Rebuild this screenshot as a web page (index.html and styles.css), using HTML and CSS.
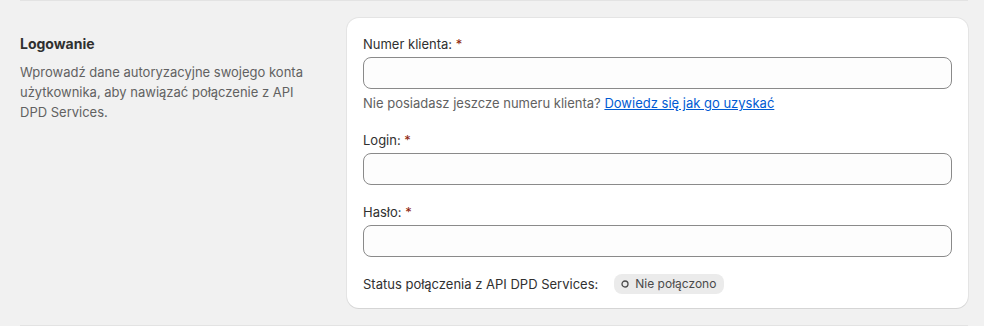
FILE: index.html
```html
<!DOCTYPE html>
<html lang="pl">
<head>
    <meta charset="UTF-8">
    <meta name="viewport" content="width=device-width, initial-scale=1.0">
    <title>Logowanie DPD</title>
    <link rel="stylesheet" href="styles.css">
</head>
<body>
    <div class="page">
        <div class="section">
            <div class="section-info">
                <h2>Logowanie</h2>
                <p>Wprowadź dane autoryzacyjne swojego konta użytkownika, aby nawiązać połączenie z API DPD Services.</p>
            </div>
            <div class="card">
                <div class="field">
                    <label for="client">Numer klienta: <span class="req">*</span></label>
                    <input id="client" type="text">
                    <div class="help">Nie posiadasz jeszcze numeru klienta? <a href="#">Dowiedz się jak go uzyskać</a></div>
                </div>
                <div class="field">
                    <label for="login">Login: <span class="req">*</span></label>
                    <input id="login" type="text">
                </div>
                <div class="field">
                    <label for="pass">Hasło: <span class="req">*</span></label>
                    <input id="pass" type="password">
                </div>
                <div class="status-row">
                    <span>Status połączenia z API DPD Services:</span>
                    <span class="badge">
                        <svg width="10" height="10" viewBox="0 0 10 10"><circle cx="5" cy="5" r="3" fill="none" stroke="#4a4a4a" stroke-width="1.3"/></svg>
                        Nie połączono
                    </span>
                </div>
            </div>
        </div>
    </div>
</body>
</html>
```

FILE: styles.css
```css
body {
    margin: 0;
    font-family: Inter, "Noto Sans", sans-serif;
    font-size: 13px;
    line-height: 20px;
    color: #303030;
    background-color: #f1f1f1;
}
.page {
    padding: 0 16px 0 20px;
}
.section {
    display: flex;
    gap: 20px;
    padding: 17px 0;
    border-top: 1px solid #e3e3e3;
    border-bottom: 1px solid #e3e3e3;
}
.section-info {
    width: 307px;
    flex-shrink: 0;
    padding-top: 16px;
}
.section-info h2 {
    margin: 0;
    font-size: 14px;
    font-weight: 650;
    line-height: 20px;
}
.section-info p {
    margin: 8px 0 0;
    color: #616161;
    padding-right: 20px;
}
.card {
    flex: 1;
    background-color: white;
    border-radius: 12px;
    padding: 16px 16px 14px;
    box-shadow: 0 1px 0 rgba(26,26,26,0.07), 0 0 0 1px rgba(26,26,26,0.06);
    display: flex;
    flex-direction: column;
    gap: 17px;
}
.field label {
    display: block;
    margin-bottom: 3px;
}
.req {
    color: #8e1f0b;
}
.field input {
    display: block;
    box-sizing: border-box;
    width: 100%;
    height: 32px;
    border: 1px solid #8a8a8a;
    border-radius: 8px;
    background-color: #fdfdfd;
    font: inherit;
    padding: 0 12px;
}
.help {
    margin-top: 4px;
    color: #616161;
}
.help a {
    color: #005bd3;
}
.status-row {
    display: flex;
    align-items: center;
    gap: 16px;
}
.badge {
    display: inline-flex;
    align-items: center;
    gap: 5px;
    background-color: #ebebeb;
    border-radius: 8px;
    padding: 0 8px 0 6px;
    font-size: 12px;
    color: #4a4a4a;
}
```
